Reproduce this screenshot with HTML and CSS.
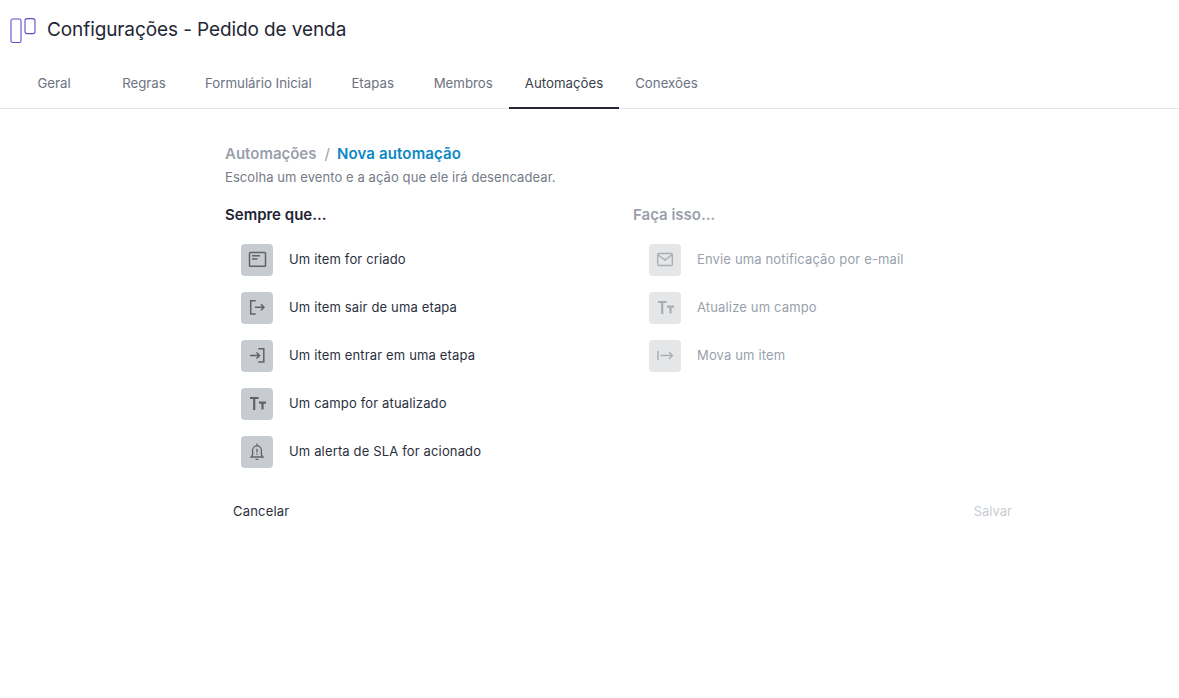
FILE: index.html
```html
<!DOCTYPE html>
<html lang="en">
<head>
    <meta charset="UTF-8">
    <title>Configurações - Pedido de venda</title>
    <link rel="stylesheet" href="styles.css">
</head>
<body>
    <header class="page-header">
        <svg class="board-icon" width="26" height="26" viewBox="0 0 26 26" fill="none" stroke="#5b4fc9" stroke-width="1.1">
            <rect x="1" y="1" width="10" height="23.5" rx="1.8"/>
            <rect x="15" y="0.6" width="10" height="15" rx="2.2"/>
        </svg>
        <h1 class="page-title">Configurações - Pedido de venda</h1>
    </header>

    <nav class="tabs">
        <a class="tab">Geral</a>
        <a class="tab">Regras</a>
        <a class="tab">Formulário Inicial</a>
        <a class="tab">Etapas</a>
        <a class="tab">Membros</a>
        <a class="tab active">Automações</a>
        <a class="tab">Conexões</a>
    </nav>

    <main class="content">
        <div class="breadcrumb">
            <span class="crumb-parent">Automações</span>
            <span class="crumb-sep">/</span>
            <span class="crumb-current">Nova automação</span>
        </div>
        <p class="subtitle">Escolha um evento e a ação que ele irá desencadear.</p>

        <div class="columns">
            <section class="column">
                <h2 class="column-title">Sempre que...</h2>
                <ul class="option-list">
                    <li class="option">
                        <span class="option-icon">
                            <svg width="20" height="20" viewBox="0 0 20 20" fill="none" stroke="currentColor" stroke-width="1.5">
                                <rect x="2.5" y="2.6" width="16" height="13.6" rx="0.8"/>
                                <path d="M5 5.8h8M5 9h5.5"/>
                            </svg>
                        </span>
                        <span class="option-label">Um item for criado</span>
                    </li>
                    <li class="option">
                        <span class="option-icon">
                            <svg width="20" height="20" viewBox="0 0 20 20" fill="none" stroke="currentColor" stroke-width="1.5">
                                <path d="M8.7 2.7H3.7V16h5"/>
                                <path d="M8 9.3h9M14 6.3l3 3-3 3"/>
                            </svg>
                        </span>
                        <span class="option-label">Um item sair de uma etapa</span>
                    </li>
                    <li class="option">
                        <span class="option-icon">
                            <svg width="20" height="20" viewBox="0 0 20 20" fill="none" stroke="currentColor" stroke-width="1.5">
                                <path d="M11.3 2.7h5.5V16h-5.5"/>
                                <path d="M3 9.5h9.5M9.5 6.5l3 3-3 3"/>
                            </svg>
                        </span>
                        <span class="option-label">Um item entrar em uma etapa</span>
                    </li>
                    <li class="option">
                        <span class="option-icon">
                            <svg width="20" height="20" viewBox="0 0 20 20" fill="none" stroke="currentColor" stroke-width="2.2">
                                <path d="M3 4h8.5M7.2 4v12M12 8.6h7M15.5 8.6v7"/>
                            </svg>
                        </span>
                        <span class="option-label">Um campo for atualizado</span>
                    </li>
                    <li class="option">
                        <span class="option-icon">
                            <svg width="20" height="20" viewBox="0 0 20 20" fill="none" stroke="currentColor" stroke-width="1.3">
                                <path d="M4 15h12l-1.6-2.2V8.2a4.4 4.4 0 0 0-8.8 0v4.6z"/>
                                <path d="M10 1.6v2.2M8.6 17.4h2.8M10 6.8v3.6M10 11.6v1.2"/>
                            </svg>
                        </span>
                        <span class="option-label">Um alerta de SLA for acionado</span>
                    </li>
                </ul>
            </section>

            <section class="column disabled">
                <h2 class="column-title">Faça isso...</h2>
                <ul class="option-list">
                    <li class="option">
                        <span class="option-icon">
                            <svg width="20" height="20" viewBox="0 0 20 20" fill="none" stroke="currentColor" stroke-width="1.4">
                                <rect x="2.7" y="3.5" width="14.6" height="12" rx="1.2"/>
                                <path d="M3 4.8l7 5.3 7-5.3"/>
                            </svg>
                        </span>
                        <span class="option-label">Envie uma notificação por e-mail</span>
                    </li>
                    <li class="option">
                        <span class="option-icon">
                            <svg width="20" height="20" viewBox="0 0 20 20" fill="none" stroke="currentColor" stroke-width="2.2">
                                <path d="M3 4h8.5M7.2 4v12M12 8.6h7M15.5 8.6v7"/>
                            </svg>
                        </span>
                        <span class="option-label">Atualize um campo</span>
                    </li>
                    <li class="option">
                        <span class="option-icon">
                            <svg width="20" height="20" viewBox="0 0 20 20" fill="none" stroke="currentColor" stroke-width="1.4">
                                <path d="M3 5v9M5.5 9.5h12M14 6l3.5 3.5-3.5 3.5"/>
                            </svg>
                        </span>
                        <span class="option-label">Mova um item</span>
                    </li>
                </ul>
            </section>
        </div>

        <div class="actions">
            <button class="btn">Cancelar</button>
            <button class="btn btn-disabled">Salvar</button>
        </div>
    </main>
</body>
</html>
```

FILE: styles.css
```css
body {
    margin: 0;
    background-color: #fff;
    font-family: "Inter", "Liberation Sans", sans-serif;
    color: #1f2433;
}

.page-header {
    display: flex;
    align-items: center;
    height: 58px;
    padding-left: 10px;
    gap: 11px;
}

.board-icon {
    flex-shrink: 0;
    margin-top: 3px;
}

.page-title {
    margin: 0;
    font-size: 19px;
    font-weight: 400;
    color: #232736;
    letter-spacing: -0.1px;
}

.tabs {
    display: flex;
    height: 50px;
    padding-left: 9px;
    border-bottom: 1px solid #e3e5ea;
}

.tab {
    min-width: 90px;
    box-sizing: border-box;
    padding: 0 16px;
    display: flex;
    align-items: center;
    justify-content: center;
    font-size: 13.25px;
    color: #6c727f;
    border-bottom: 2px solid transparent;
    margin-bottom: -1px;
}

.tab.active {
    color: #3a3f4c;
    border-bottom-color: #232736;
}

.content {
    width: 795px;
    margin-left: 225px;
    padding-top: 36px;
}

.breadcrumb {
    display: flex;
    gap: 8px;
    font-size: 15px;
    line-height: 18px;
    font-weight: 600;
}

.crumb-parent {
    color: #9a9fac;
}

.crumb-sep {
    color: #9a9fac;
    font-weight: 400;
}

.crumb-current {
    color: #0b87c4;
    margin-left: -1px;
    letter-spacing: 0.15px;
}

.subtitle {
    margin: 5px 0 0;
    font-size: 13px;
    line-height: 18px;
    letter-spacing: 0.08px;
    color: #757b88;
}

.columns {
    display: grid;
    grid-template-columns: 408px 1fr;
    margin-top: 19px;
}

.column-title {
    margin: 0;
    font-size: 15px;
    line-height: 20px;
    font-weight: 600;
    color: #1f2433;
}

.option-list {
    list-style: none;
    margin: 11px 0 0;
    padding: 0 0 0 16px;
}

.option {
    display: flex;
    align-items: center;
    gap: 16px;
    height: 48px;
    font-size: 13px;
    letter-spacing: 0.15px;
    color: #2b3040;
}

.option-label {
    padding-bottom: 2px;
}

.option-icon {
    width: 32px;
    height: 32px;
    border-radius: 4px;
    background-color: #c8ccd1;
    color: #5d636d;
    display: flex;
    align-items: center;
    justify-content: center;
}

.disabled .column-title {
    color: #9a9fac;
}

.disabled .option {
    color: #9a9fac;
}

.disabled .option-icon {
    background-color: #e4e6e8;
    color: #a9adb4;
}

.actions {
    display: flex;
    justify-content: space-between;
    margin-top: 17px;
}

.btn {
    border: none;
    background: none;
    font-family: inherit;
    font-size: 13px;
    line-height: 36px;
    letter-spacing: 0.2px;
    padding: 0 8px;
    color: #2b3040;
}

.btn-disabled {
    letter-spacing: 0;
    color: #c9ccd2;
}
```
